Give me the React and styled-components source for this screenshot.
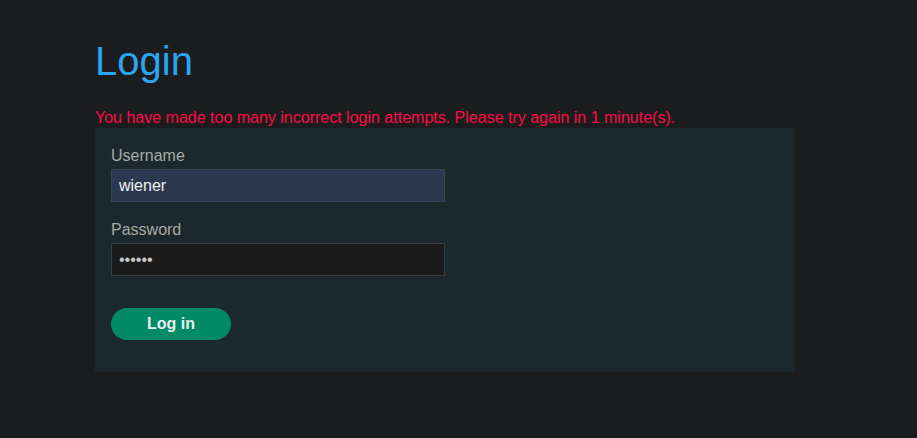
import React from "react";
import styled, { createGlobalStyle } from "styled-components";

const GlobalStyle = createGlobalStyle`
    html, body {
        margin: 0;
        background: #1b1c1e;
        font-family: "Liberation Sans", Arial, sans-serif;
    }
`

const Page = styled.div`
    padding: 35px 0 0 95px;
    width: 700px;
`

const Title = styled.h1`
    margin: 0 0 21px 0;
    font-size: 40px;
    font-weight: 400;
    line-height: 52px;
    color: #2aa6f0;
`

const Warning = styled.p`
    margin: 0;
    font-size: 16px;
    line-height: 20px;
    color: #ff0a4a;
`

const Panel = styled.form`
    display: flex;
    flex-direction: column;
    background: #1b282d;
    padding: 18px 16px 32px 16px;
`

const Label = styled.label`
    font-size: 16px;
    line-height: 20px;
    color: #a9aaa4;
    margin-bottom: 3px;
`

const Input = styled.input`
    box-sizing: border-box;
    width: 334px;
    height: 33px;
    margin: 0 0 18px 0;
    padding: 0 7px;
    border: 1px solid ${p => (p.$filled ? "#3b4352" : "#3a3d40")};
    background: ${p => (p.$filled ? "#2c3850" : "#1b1b1c")};
    color: ${p => (p.$filled ? "#f1f1f1" : "#c9c9c9")};
    font-family: "Liberation Sans", Arial, sans-serif;
    font-size: 16px;
    outline: none;
`

const Button = styled.button`
    margin-top: 14px;
    width: 120px;
    height: 32px;
    border: none;
    border-radius: 16px;
    background: #008a68;
    color: #e9efec;
    font-family: "Liberation Sans", Arial, sans-serif;
    font-weight: 700;
    font-size: 16px;
`

function App() {
    return (
        <Page>
            <GlobalStyle />
            <Title>Login</Title>
            <Warning>You have made too many incorrect login attempts. Please try again in 1 minute(s).</Warning>
            <Panel onSubmit={e => e.preventDefault()}>
                <Label>Username</Label>
                <Input $filled defaultValue="wiener" />
                <Label>Password</Label>
                <Input type="password" defaultValue="peter1" />
                <Button>Log in</Button>
            </Panel>
        </Page>
    );
}

export default App;
